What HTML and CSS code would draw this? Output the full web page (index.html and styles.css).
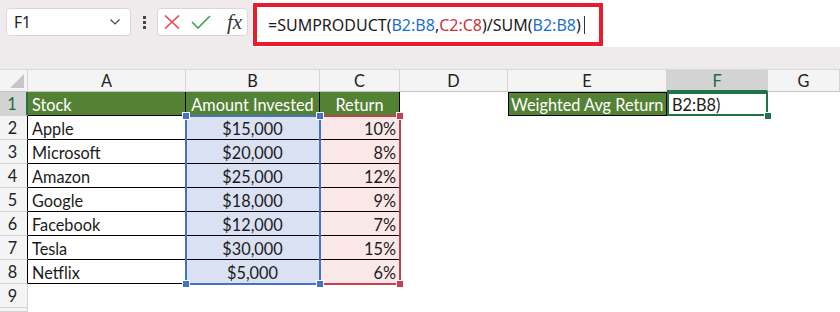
FILE: index.html
```html
<!DOCTYPE html>
<html lang="en">
<head>
    <meta charset="UTF-8">
    <title>Weighted Avg Return</title>
    <link rel="stylesheet" href="styles.css">
</head>
<body>
    <!-- formula bar -->
    <div class="topbar">
        <div class="namebox">
            <span>F1</span>
            <svg width="10" height="6" viewBox="0 0 10 6"><path d="M0.5 0.5 L5 5 L9.5 0.5" fill="none" stroke="#444" stroke-width="1.2"/></svg>
        </div>
        <div class="grip"><i></i><i></i><i></i></div>
        <div class="fxbox">
            <svg width="16" height="14" viewBox="0 0 16 14"><path d="M1 0.5 L15 13.5 M15 0.5 L1 13.5" stroke="#e5484d" stroke-width="1.6" fill="none"/></svg>
            <svg width="20" height="14" viewBox="0 0 20 14"><path d="M1 7 L7 13 L19 1" stroke="#3fa35d" stroke-width="1.7" fill="none"/></svg>
            <span class="fx">fx</span>
        </div>
        <div class="formula-bar">
            <div class="formula">=SUMPRODUCT(<span class="ref-b">B2:B8</span>,<span class="ref-c">C2:C8</span>)/SUM(<span class="ref-b">B2:B8</span>)<span class="caret"></span></div>
        </div>
    </div>

    <!-- sheet -->
    <div class="sheet">
        <div class="ch corner"></div>
        <div class="ch">A</div>
        <div class="ch">B</div>
        <div class="ch">C</div>
        <div class="ch">D</div>
        <div class="ch">E</div>
        <div class="ch ch-sel">F</div>
        <div class="ch">G</div>

        <div class="rh rh-sel">1</div>
        <div class="c t head">Stock</div>
        <div class="c t head mid">Amount Invested</div>
        <div class="c t head mid">Return</div>
        <div class="c"></div>
        <div class="c head box">Weighted Avg Return</div>
        <div class="c active">B2:B8)</div>
        <div class="c"></div>

        <div class="rh tb">2</div>
        <div class="c t">Apple</div>
        <div class="c t mid blue">$15,000</div>
        <div class="c t num pink">10%</div>
        <div class="c"></div><div class="c"></div><div class="c"></div><div class="c"></div>

        <div class="rh tb">3</div>
        <div class="c t">Microsoft</div>
        <div class="c t mid blue">$20,000</div>
        <div class="c t num pink">8%</div>
        <div class="c"></div><div class="c"></div><div class="c"></div><div class="c"></div>

        <div class="rh tb">4</div>
        <div class="c t">Amazon</div>
        <div class="c t mid blue">$25,000</div>
        <div class="c t num pink">12%</div>
        <div class="c"></div><div class="c"></div><div class="c"></div><div class="c"></div>

        <div class="rh tb">5</div>
        <div class="c t">Google</div>
        <div class="c t mid blue">$18,000</div>
        <div class="c t num pink">9%</div>
        <div class="c"></div><div class="c"></div><div class="c"></div><div class="c"></div>

        <div class="rh tb">6</div>
        <div class="c t">Facebook</div>
        <div class="c t mid blue">$12,000</div>
        <div class="c t num pink">7%</div>
        <div class="c"></div><div class="c"></div><div class="c"></div><div class="c"></div>

        <div class="rh tb">7</div>
        <div class="c t">Tesla</div>
        <div class="c t mid blue">$30,000</div>
        <div class="c t num pink">15%</div>
        <div class="c"></div><div class="c"></div><div class="c"></div><div class="c"></div>

        <div class="rh tb">8</div>
        <div class="c t">Netflix</div>
        <div class="c t mid blue">$5,000</div>
        <div class="c t num pink">6%</div>
        <div class="c"></div><div class="c"></div><div class="c"></div><div class="c"></div>

        <div class="rh">9</div>
        <div class="c"></div><div class="c"></div><div class="c"></div><div class="c"></div><div class="c"></div><div class="c"></div><div class="c"></div>

        <div class="rh"></div>
        <div class="c"></div><div class="c"></div><div class="c"></div><div class="c"></div><div class="c"></div><div class="c"></div><div class="c"></div>

        <!-- range highlights while editing -->
        <div class="range range-c"><i class="h tr"></i><i class="h br"></i></div>
        <div class="range range-b"><i class="h tl"></i><i class="h tr"></i><i class="h bl"></i><i class="h br"></i></div>
        <i class="fill-handle"></i>
    </div>
</body>
</html>
```

FILE: styles.css
```css
* {
    margin: 0;
    padding: 0;
    box-sizing: border-box;
}

body {
    font-family: Lato, "Liberation Sans", sans-serif;
    background-color: #fff;
    color: #1b1b1b;
    width: 840px;
    height: 312px;
    overflow: hidden;
}

/* Formula bar */
.topbar {
    height: 69px;
    background-color: #efeaeb;
    display: flex;
    align-items: flex-start;
}

.namebox {
    margin: 8px 0 0 6px;
    width: 125px;
    height: 28px;
    background-color: #fff;
    border: 1px solid #dcd7d8;
    border-radius: 4px;
    display: flex;
    align-items: center;
    justify-content: space-between;
    padding: 0 10px 0 7px;
    font-family: "Noto Sans", sans-serif;
    font-size: 15.5px;
    color: #222;
}

.grip {
    margin: 16px 0 0 12px;
    display: flex;
    flex-direction: column;
    gap: 2px;
}

.grip i {
    display: block;
    width: 3px;
    height: 3px;
    background-color: #444;
}

.fxbox {
    margin: 8px 0 0 11px;
    width: 91px;
    height: 28px;
    background-color: #fff;
    border: 1px solid #dcd7d8;
    border-radius: 4px;
    display: flex;
    align-items: center;
    padding-left: 6px;
    gap: 11px;
}

.fx {
    font-family: "Liberation Serif", serif;
    font-style: italic;
    font-size: 21px;
    color: #333;
    margin-left: 5px;
    line-height: 1;
}

.formula-bar {
    margin-left: 4px;
    flex: 1;
    height: 47px;
    background-color: #fff;
    padding: 3px 0 0 1px;
}

.formula {
    width: 350px;
    height: 43px;
    border: 4px solid #e81c2a;
    padding-left: 11px;
    display: flex;
    align-items: center;
    font-family: "Noto Sans", sans-serif;
    font-size: 16px;
    color: #1b1b1b;
    white-space: pre;
}

.ref-b {
    color: #1f6fce;
}

.ref-c {
    color: #c9323d;
}

.caret {
    display: inline-block;
    width: 1px;
    height: 18px;
    margin-left: 3px;
    background-color: #333;
}

/* Sheet grid */
.sheet {
    position: relative;
    display: grid;
    grid-template-columns: 28px 158px 134px 80px 108px 159px 101px 1fr;
    grid-template-rows: 23px repeat(9, 24px) 4px;
    font-size: 16.3px;
}

.ch {
    background-color: #f4f4f4;
    border-top: 1px solid #d8d8d8;
    border-right: 1px solid #d4d4d4;
    border-bottom: 1px solid #c4c4c4;
    text-align: center;
    line-height: 22px;
    color: #222;
}

.ch-sel {
    background-color: #d3d3d3;
    color: #1d6b40;
    border-bottom: 2px solid #217346;
}

.corner {
    position: relative;
}

.corner::after {
    content: "";
    position: absolute;
    right: 3px;
    bottom: 3px;
    width: 14px;
    height: 14px;
    background-color: #c6c6c6;
    clip-path: polygon(100% 0, 100% 100%, 0 100%);
}

.rh {
    background-color: #f4f4f4;
    border-right: 1px solid #d4d4d4;
    border-bottom: 1px solid #d4d4d4;
    text-align: center;
    line-height: 24px;
    color: #222;
    padding-right: 2px;
    overflow: hidden;
}

.rh.tb {
    border-right-color: #000;
}

.rh-sel {
    background-color: #d3d3d3;
    color: #1d6b40;
    border-right: 2px solid #217346;
}

.c {
    padding: 0 4px;
    line-height: 25px;
    white-space: nowrap;
    overflow: hidden;
}

.t {
    border-right: 1px solid #000;
    border-bottom: 1px solid #000;
}

.head {
    background-color: #548235;
    color: #fff;
}

.mid {
    text-align: center;
}

.num {
    text-align: right;
    padding-right: 3px;
}

.blue {
    background-color: #d9e1f3;
}

.pink {
    background-color: #fae7e8;
}

.box {
    border: 1px solid #000;
    line-height: 23px;
    padding: 0 2px;
}

.active {
    border: 2px solid #217346;
    line-height: 21px;
    padding-left: 3px;
}

/* Range highlights */
.range {
    position: absolute;
    top: 46px;
    height: 170px;
    border: 2px solid;
}

.range-b {
    left: 185px;
    width: 136px;
    border-color: #4472c4;
}

.range-c {
    left: 319px;
    width: 82px;
    border-color: #c6404c;
}

.h {
    position: absolute;
    width: 6px;
    height: 6px;
    box-shadow: 0 0 0 1px #fff;
}

.range-b .h {
    background-color: #4472c4;
}

.range-c .h {
    background-color: #c6404c;
}

.h.tl { left: -4px; top: -4px; }
.h.tr { right: -4px; top: -4px; }
.h.bl { left: -4px; bottom: -4px; }
.h.br { right: -4px; bottom: -4px; }

.fill-handle {
    position: absolute;
    left: 765px;
    top: 44px;
    width: 6px;
    height: 6px;
    background-color: #217346;
    box-shadow: 0 0 0 1px #fff;
}
```
